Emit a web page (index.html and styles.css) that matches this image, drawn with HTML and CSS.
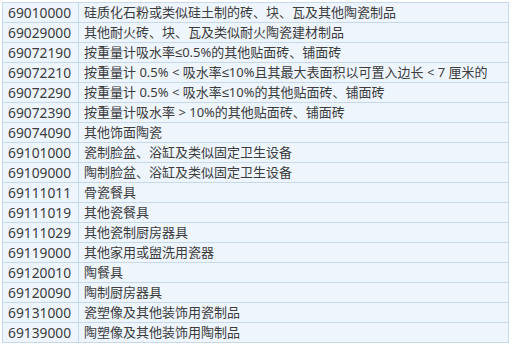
FILE: index.html
```html
<!DOCTYPE html>
<html>
<head>
<meta charset="utf-8">
<link rel="stylesheet" href="styles.css">
</head>
<body>
<table class="codes">
<tr><td class="code">69010000</td><td class="desc">硅质化石粉或类似硅土制的砖、块、瓦及其他陶瓷制品</td></tr>
<tr><td class="code">69029000</td><td class="desc">其他耐火砖、块、瓦及类似耐火陶瓷建材制品</td></tr>
<tr><td class="code">69072190</td><td class="desc">按重量计吸水率≤0.5%的其他贴面砖、铺面砖</td></tr>
<tr><td class="code">69072210</td><td class="desc">按重量计 0.5% &lt; 吸水率≤10%且其最大表面积以可置入边长 &lt; 7 厘米的</td></tr>
<tr><td class="code">69072290</td><td class="desc">按重量计 0.5% &lt; 吸水率≤10%的其他贴面砖、铺面砖</td></tr>
<tr><td class="code">69072390</td><td class="desc">按重量计吸水率 &gt; 10%的其他贴面砖、铺面砖</td></tr>
<tr><td class="code">69074090</td><td class="desc">其他饰面陶瓷</td></tr>
<tr><td class="code">69101000</td><td class="desc">瓷制脸盆、浴缸及类似固定卫生设备</td></tr>
<tr><td class="code">69109000</td><td class="desc">陶制脸盆、浴缸及类似固定卫生设备</td></tr>
<tr><td class="code">69111011</td><td class="desc">骨瓷餐具</td></tr>
<tr><td class="code">69111019</td><td class="desc">其他瓷餐具</td></tr>
<tr><td class="code">69111029</td><td class="desc">其他瓷制厨房器具</td></tr>
<tr><td class="code">69119000</td><td class="desc">其他家用或盥洗用瓷器</td></tr>
<tr><td class="code">69120010</td><td class="desc">陶餐具</td></tr>
<tr><td class="code">69120090</td><td class="desc">陶制厨房器具</td></tr>
<tr><td class="code">69131000</td><td class="desc">瓷塑像及其他装饰用瓷制品</td></tr>
<tr><td class="code">69139000</td><td class="desc">陶塑像及其他装饰用陶制品</td></tr>
</table>
</body>
</html>
```
FILE: styles.css
```css
html, body {
  margin: 0;
  padding: 0;
  background: #ffffff;
}
body {
  padding: 2px 0 0 2px;
}
.codes {
  border-collapse: collapse;
  table-layout: fixed;
  width: 507px;
  background: #eef5fc;
  font-family: "Noto Sans", "Liberation Sans", "Noto Sans CJK SC", sans-serif;
  font-size: 13px;
  color: #3c3c3c;
}
.codes td {
  border: 1px solid #c5d8ec;
  height: 19px;
  padding: 0 0 0 5px;
  line-height: 19px;
  white-space: nowrap;
  overflow: hidden;
  box-sizing: border-box;
}
.codes tr {
  height: 20px;
}
.codes .code {
  width: 76px;
  font-size: 13.8px;
}
.codes .desc {
  font-family: "Noto Sans", "Liberation Sans", "Noto Sans CJK SC", sans-serif;
}
```
